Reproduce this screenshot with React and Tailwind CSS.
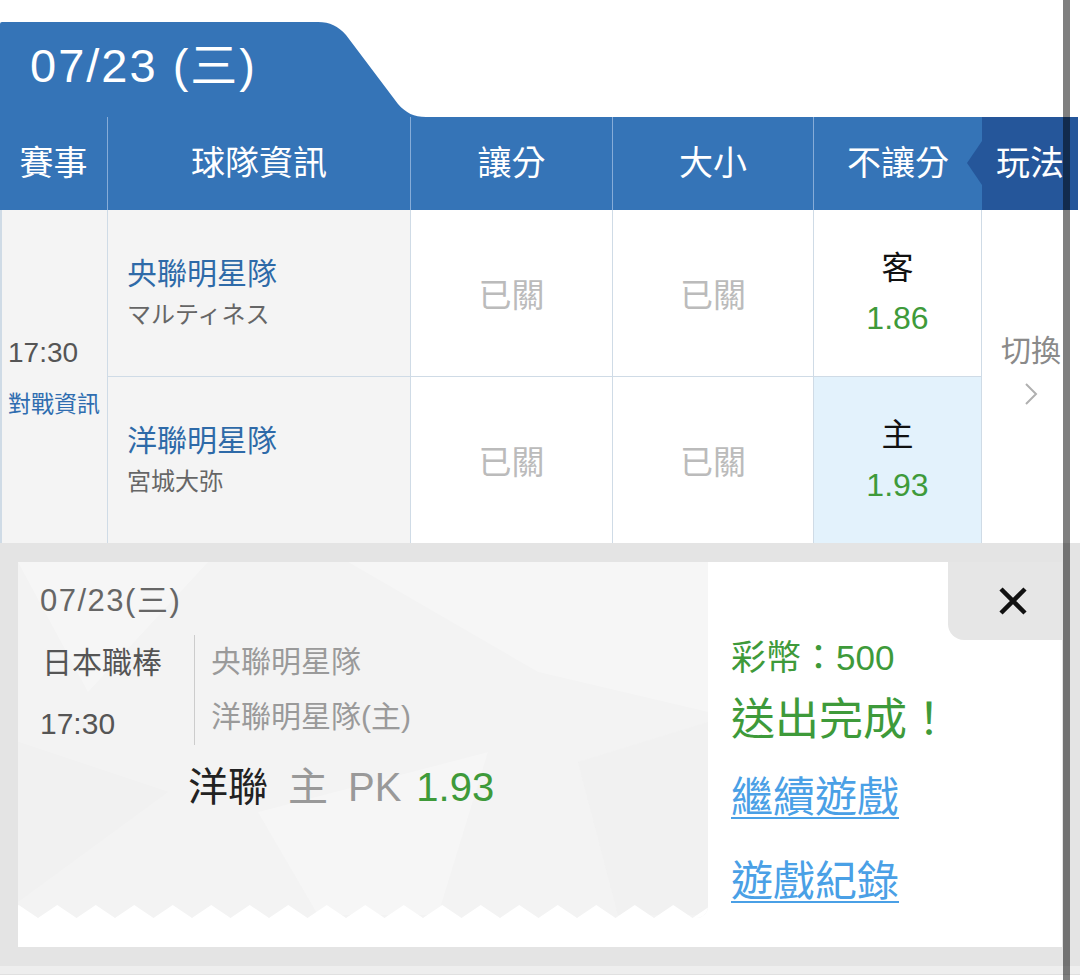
import React from "react";

const head = [
  ["賽事", "w-[108px] border-r border-[#86acd8]"],
  ["球隊資訊", "w-[303px] border-r border-[#86acd8]"],
  ["讓分", "w-[202px] border-r border-[#86acd8]"],
  ["大小", "w-[201px] border-r border-[#86acd8]"],
  ["不讓分", "w-[168px]"],
];

const teams = [
  { name: "央聯明星隊", sub: "マルティネス", side: "客", odds: "1.86", pick: false },
  { name: "洋聯明星隊", sub: "宮城大弥", side: "主", odds: "1.93", pick: true },
];

function Zigzag() {
  const d = [];
  for (let i = -1; i < 18; i++) {
    const x = 20 + i * 38.5;
    d.push(`M${x} 14 L${x + 19.25} 1 L${x + 38.5} 14 Z`);
  }
  return (
    <svg width="690" height="14" className="block">
      <path d={d.join(" ")} fill="#ffffff" />
    </svg>
  );
}

function TicketBg() {
  return (
    <svg width="690" height="353" className="absolute inset-0">
      <polygon points="0,0 190,0 70,130" fill="#ffffff" opacity="0.3" />
      <polygon points="330,0 690,0 690,150 520,110" fill="#ffffff" opacity="0.25" />
      <polygon points="0,180 150,230 0,340" fill="#eeeeee" opacity="0.4" />
      <polygon points="240,250 470,190 420,353 300,353" fill="#ffffff" opacity="0.25" />
      <polygon points="560,200 690,160 690,353 600,353" fill="#efefef" opacity="0.35" />
    </svg>
  );
}

export default function App() {
  return (
    <div className="relative w-[1080px] h-[980px] bg-white overflow-hidden font-['Liberation_Sans','Noto_Sans_CJK_TC',sans-serif]">
      {/* date tab */}
      <div className="flex items-end pt-[22px]">
        <div className="w-[318px] h-[95px] bg-[#3574b7] rounded-tl-[2px] flex items-center pl-[30px] pb-[8px] text-white text-[47px] tracking-[2px] leading-none whitespace-nowrap">
          07/23 (三)
        </div>
        <svg width="108" height="95" className="block">
          <path d="M0 0 C12 0 20 4 28 13 L80 82 C88 91 96 95 108 95 L0 95 Z" fill="#3574b7" />
        </svg>
      </div>

      {/* header row */}
      <div className="flex w-[1078px] h-[93px] bg-[#3574b7] text-white text-[34px]">
        {head.map(([t, c]) => (
          <div key={t} className={`${c} flex items-center justify-center`}>
            {t}
          </div>
        ))}
        <div className="relative w-[96px] bg-[#25569a] flex items-center justify-center">
          <div className="absolute left-[-15px] top-[24px] w-0 h-0 border-y-[22px] border-y-transparent border-r-[15px] border-r-[#25569a]" />
          玩法
        </div>
      </div>

      {/* body */}
      <div className="flex w-[1078px] h-[333px]">
        <div className="w-[108px] bg-[#f4f4f4] border-l-2 border-r border-[#cfdbe6] flex flex-col justify-center pl-[6px]">
          <div className="text-[28px] leading-[32px] text-[#555555]">17:30</div>
          <div className="mt-[22px] text-[23px] leading-[26px] text-[#2f6db0] whitespace-nowrap">對戰資訊</div>
        </div>

        <div className="w-[303px] bg-[#f4f4f4] border-r border-[#cfdbe6] flex flex-col">
          {teams.map((t, i) => (
            <div
              key={t.name}
              className={`h-[167px] flex flex-col justify-center pl-[19px] ${i === 0 ? "border-b border-[#cfdbe6]" : "flex-1"}`}
            >
              <div className="text-[30px] leading-[36px] text-[#2e6aa8]">{t.name}</div>
              <div className="mt-[8px] text-[24px] leading-[30px] text-[#666666]">{t.sub}</div>
            </div>
          ))}
        </div>

        {["w-[202px]", "w-[201px]"].map((w) => (
          <div key={w} className={`${w} border-r border-[#cfdbe6] flex flex-col`}>
            {teams.map((t, i) => (
              <div
                key={t.name}
                className={`h-[167px] flex items-center justify-center pt-[6px] text-[33px] text-[#bbbbbb] ${i === 0 ? "border-b border-[#cfdbe6]" : "flex-1"}`}
              >
                已關
              </div>
            ))}
          </div>
        ))}

        <div className="w-[168px] border-r border-[#cfdbe6] flex flex-col">
          {teams.map((t, i) => (
            <div
              key={t.name}
              className={`h-[167px] flex flex-col items-center justify-center ${i === 0 ? "border-b border-[#cfdbe6]" : "flex-1 bg-[#e3f2fc]"}`}
            >
              <div className="text-[32px] leading-[36px] text-[#111111]">{t.side}</div>
              <div className="mt-[14px] text-[32px] leading-[36px] text-[#3e9a3a]">{t.odds}</div>
            </div>
          ))}
        </div>

        <div className="w-[96px] flex flex-col items-center justify-center pb-[14px] pl-[2px]">
          <div className="text-[30px] leading-[34px] text-[#8a8a8a]">切換</div>
          <svg width="14" height="24" viewBox="0 0 14 24" className="mt-[14px]">
            <polyline points="2,2 12,12 2,22" fill="none" stroke="#b0b0b0" strokeWidth="2" />
          </svg>
        </div>
      </div>

      {/* bottom sheet */}
      <div className="w-[1080px] h-[423px] bg-[#e4e4e4] pt-[19px] pl-[18px]">
        <div className="w-[1044px] h-[385px] bg-white flex">
          <div className="relative w-[690px] h-[356px] bg-[#f3f3f3] rounded-br-[12px] overflow-hidden flex flex-col">
            <TicketBg />
            <div className="relative flex-1 pl-[22px] pt-[22px]">
              <div className="text-[31px] leading-[34px] tracking-[1.5px] text-[#666666]">07/23(三)</div>
              <div className="flex mt-[17px] h-[110px]">
                <div className="w-[155px] border-r border-[#cccccc] pt-[8px] text-[30px] leading-[40px] text-[#555555]">
                  <div className="pl-[2px]">日本職棒</div>
                  <div className="mt-[21px]">17:30</div>
                </div>
                <div className="pl-[16px] pt-[7px] text-[30px] leading-[40px] text-[#9a9a9a]">
                  <div>央聯明星隊</div>
                  <div className="mt-[15px]">洋聯明星隊(主)</div>
                </div>
              </div>
              <div className="mt-[18px] pl-[148px] flex items-baseline text-[40px] leading-[48px] whitespace-nowrap">
                <span className="text-[#222222]">洋聯</span>
                <span className="ml-[20px] text-[#999999]">主</span>
                <span className="ml-[20px] text-[#999999]">PK</span>
                <span className="ml-[15px] text-[#3e9a3a]">1.93</span>
              </div>
            </div>
            <div className="relative">
              <Zigzag />
            </div>
          </div>

          <div className="relative flex-1 pl-[23px] pt-[76px]">
            <div className="absolute right-0 top-0 w-[114px] h-[78px] bg-[#e6e6e6] rounded-bl-[16px] flex items-center justify-center pl-[16px]">
              <svg width="30" height="30" viewBox="0 0 30 30">
                <path d="M3 3 L27 27 M27 3 L3 27" stroke="#111111" strokeWidth="4.5" />
              </svg>
            </div>
            <div className="text-[35px] leading-[40px] text-[#3e9a3a] whitespace-nowrap">彩幣：500</div>
            <div className="mt-[14px] text-[44px] leading-[56px] text-[#3e9a3a]">送出完成！</div>
            <div className="mt-[24px] text-[42px] leading-[52px] text-[#4aa0e6] underline decoration-2 underline-offset-[5px]">
              繼續遊戲
            </div>
            <div className="mt-[32px] text-[42px] leading-[52px] text-[#4aa0e6] underline decoration-2 underline-offset-[5px]">
              遊戲紀錄
            </div>
          </div>
        </div>
      </div>
      <div className="w-[1080px] h-[9px] bg-[#eeeeee] border-b border-[#e0e0e0]" />

      {/* overlay scrollbar */}
      <div className="absolute top-0 left-[1063px] w-[7px] h-full bg-black/50" />
    </div>
  );
}
